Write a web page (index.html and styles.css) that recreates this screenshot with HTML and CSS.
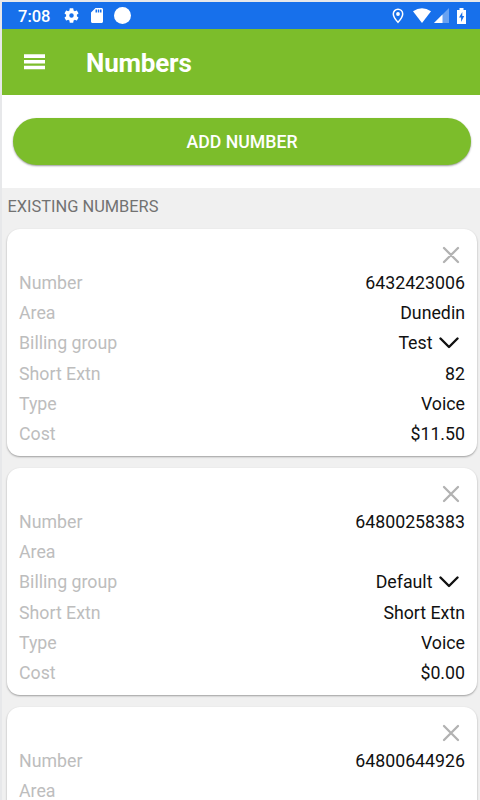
FILE: index.html
```html
<!DOCTYPE html>
<html lang="en">
<head>
<meta charset="utf-8">
<title>Numbers</title>
<link rel="stylesheet" href="styles.css">
</head>
<body>
<svg class="symbols" aria-hidden="true">
  <symbol id="close" viewBox="0 0 18 18"><path d="M2 2l14 14M16 2L2 16" fill="none" stroke="#b2b2b2" stroke-width="2.3" stroke-linecap="round"/></symbol>
  <symbol id="chevron" viewBox="0 0 20 12"><path d="M1.500 1.500L10 10l8.500-8.500" fill="none" stroke="#111" stroke-width="2.4" stroke-linecap="round" stroke-linejoin="round"/></symbol>
</svg>
<div class="screen">
  <div class="status">
    <span class="time">7:08</span>
    <svg class="gear" viewBox="2 2 20 20"><path fill="#fff" d="M19.14 12.94c.04-.3.06-.61.06-.94s-.02-.64-.07-.94l2.03-1.58c.18-.14.23-.41.12-.61l-1.92-3.32c-.12-.22-.37-.29-.59-.22l-2.39.96c-.5-.38-1.03-.7-1.62-.94l-.36-2.54A.48.48 0 0 0 13.92 2.4h-3.84c-.24 0-.43.17-.47.41l-.36 2.54c-.59.24-1.13.57-1.62.94l-2.39-.96c-.22-.08-.47 0-.59.22L2.74 8.87c-.12.21-.08.47.12.61l2.03 1.58c-.05.3-.09.63-.09.94s.02.64.07.94l-2.03 1.58c-.18.14-.23.41-.12.61l1.92 3.32c.12.22.37.29.59.22l2.39-.96c.5.38 1.03.7 1.62.94l.36 2.54c.05.24.24.41.48.41h3.84c.24 0 .44-.17.47-.41l.36-2.54c.59-.24 1.13-.56 1.62-.94l2.39.96c.22.08.47 0 .59-.22l1.92-3.32c.12-.22.07-.47-.12-.61zM12 15a3 3 0 1 1 0-6 3 3 0 0 1 0 6z"/></svg>
    <svg class="sd" viewBox="4 2 16 20"><path fill="#fff" d="M18 2h-8L4.020 8 4 20c0 1.100.9 2 2 2h12c1.100 0 2-.9 2-2V4c0-1.100-.9-2-2-2zm-6 6h-2V4h2zm3 0h-2V4h2zm3 0h-2V4h2z"/></svg>
    <span class="dot"></span>
    <span class="spacer"></span>
    <svg class="pin" viewBox="0 0 12 16"><path d="M6 1.300C3.400 1.300 1.300 3.300 1.300 5.900 1.300 9 6 14.300 6 14.300S10.700 9 10.700 5.900C10.700 3.300 8.600 1.300 6 1.300z" fill="none" stroke="#fff" stroke-width="1.500"/><circle cx="6" cy="6" r="1.900" fill="#fff"/></svg>
    <svg class="wifi" viewBox="0 0 18 15"><path fill="#fff" d="M0 3.200Q9-2.800 18 3.200L9 15z"/></svg>
    <svg class="signal" viewBox="0 0 15 15"><path fill="#fff" opacity=".35" d="M15 0v15H0z"/><path fill="#fff" d="M8.500 6.500V15H0z"/></svg>
    <svg class="battery" viewBox="0 0 9 16"><path fill="#fff" d="M2.500 0h4v2H9v14H0V2h2.500z"/><path fill="#1770eb" d="M5.300 4L2 9.500h2.100V14L7.200 8H5.300z"/></svg>
  </div>
  <header class="bar">
    <svg class="menu" viewBox="0 0 22 16"><path fill="#fff" d="M0 0h22v3.700H0zM0 6h22v3.700H0zM0 12h22v3.700H0z"/></svg>
    <h1>Numbers</h1>
  </header>
  <div class="action"><button class="add">ADD NUMBER</button></div>
  <h2>EXISTING NUMBERS</h2>
  <main>
    <section class="card">
      <svg class="close"><use href="#close"/></svg>
      <div class="row"><span>Number</span><b>6432423006</b></div>
      <div class="row"><span>Area</span><b>Dunedin</b></div>
      <div class="row group"><span>Billing group</span><b>Test</b><svg class="chevron"><use href="#chevron"/></svg></div>
      <div class="row"><span>Short Extn</span><b>82</b></div>
      <div class="row"><span>Type</span><b>Voice</b></div>
      <div class="row"><span>Cost</span><b>$11.50</b></div>
    </section>
    <section class="card">
      <svg class="close"><use href="#close"/></svg>
      <div class="row"><span>Number</span><b>64800258383</b></div>
      <div class="row"><span>Area</span></div>
      <div class="row group"><span>Billing group</span><b>Default</b><svg class="chevron"><use href="#chevron"/></svg></div>
      <div class="row"><span>Short Extn</span><b>Short Extn</b></div>
      <div class="row"><span>Type</span><b>Voice</b></div>
      <div class="row"><span>Cost</span><b>$0.00</b></div>
    </section>
    <section class="card">
      <svg class="close"><use href="#close"/></svg>
      <div class="row"><span>Number</span><b>64800644926</b></div>
      <div class="row"><span>Area</span></div>
    </section>
  </main>
</div>
</body>
</html>
```
FILE: styles.css
```css
* { box-sizing: border-box; }
body { margin: 0; font-family: Roboto, "Liberation Sans", sans-serif; background: #e7e8ea; }
svg { display: block; flex: none; }
.symbols { display: none; }
.screen { height: 800px; padding: 2px 0 0 2px; overflow: hidden; background: linear-gradient(#e7e8ea, #e7e8ea) 0 0 / 2px 100% no-repeat, linear-gradient(#e7e8ea, #e7e8ea) 0 0 / 100% 2px no-repeat, #f0f0f0; }
.status { display: flex; align-items: center; height: 27px; padding: 0 14px 0 16px; background: #1770eb; color: #fff; }
.time { width: 46px; padding-top: 1px; font-size: 16.5px; font-weight: 500; }
.gear { width: 15px; height: 15px; }
.sd { width: 12px; height: 15px; margin-left: 12px; }
.dot { width: 17px; height: 17px; margin-left: 11px; border-radius: 50%; background: #fff; }
.spacer { flex: 1; }
.pin { width: 12px; height: 16px; margin-right: 9px; }
.wifi { width: 18px; height: 15px; margin-right: 3px; }
.signal { width: 15px; height: 15px; margin-right: 8px; }
.battery { width: 9px; height: 16px; }
.bar { display: flex; align-items: center; height: 66px; padding-left: 22px; background: #7cbd2b; color: #fff; }
.menu { width: 21px; height: 16px; }
h1 { margin: 2px 0 0 41px; font-size: 26px; line-height: 30px; font-weight: 700; letter-spacing: -.2px; }
.action { height: 93px; padding: 23px 9px 0 11px; background: #fff; }
.add { display: block; width: 458px; height: 47px; border: 0; border-radius: 24px; padding: 1px 0 0; background: #7cbd2b; color: #fff; font: 500 17.7px Roboto, sans-serif; box-shadow: 0 1px 2px rgba(0,0,0,.4); }
h2 { height: 41px; margin: 0; padding: 8px 0 0 5.500px; color: #727272; font-size: 16.400px; line-height: 21px; font-weight: 400; }
main { display: flex; flex-direction: column; gap: 12px; padding: 0 3px 0 5px; }
.card { flex: none; height: 227px; padding: 17px 12px 0; border-radius: 13px; background: #fff; box-shadow: 0 1px 2px rgba(0,0,0,.35); }
.close { width: 18px; height: 18px; margin: 0 5px 4px auto; }
.row { display: flex; align-items: center; height: 30px; font-size: 17.750px; }
.row span { flex: 1; color: #bdbdbd; }
.row b { font-weight: 400; color: #111; }
.group { height: 31px; padding-bottom: 1px; }
.chevron { width: 20px; height: 12px; margin: 0 6.500px 0 6px; }
```
